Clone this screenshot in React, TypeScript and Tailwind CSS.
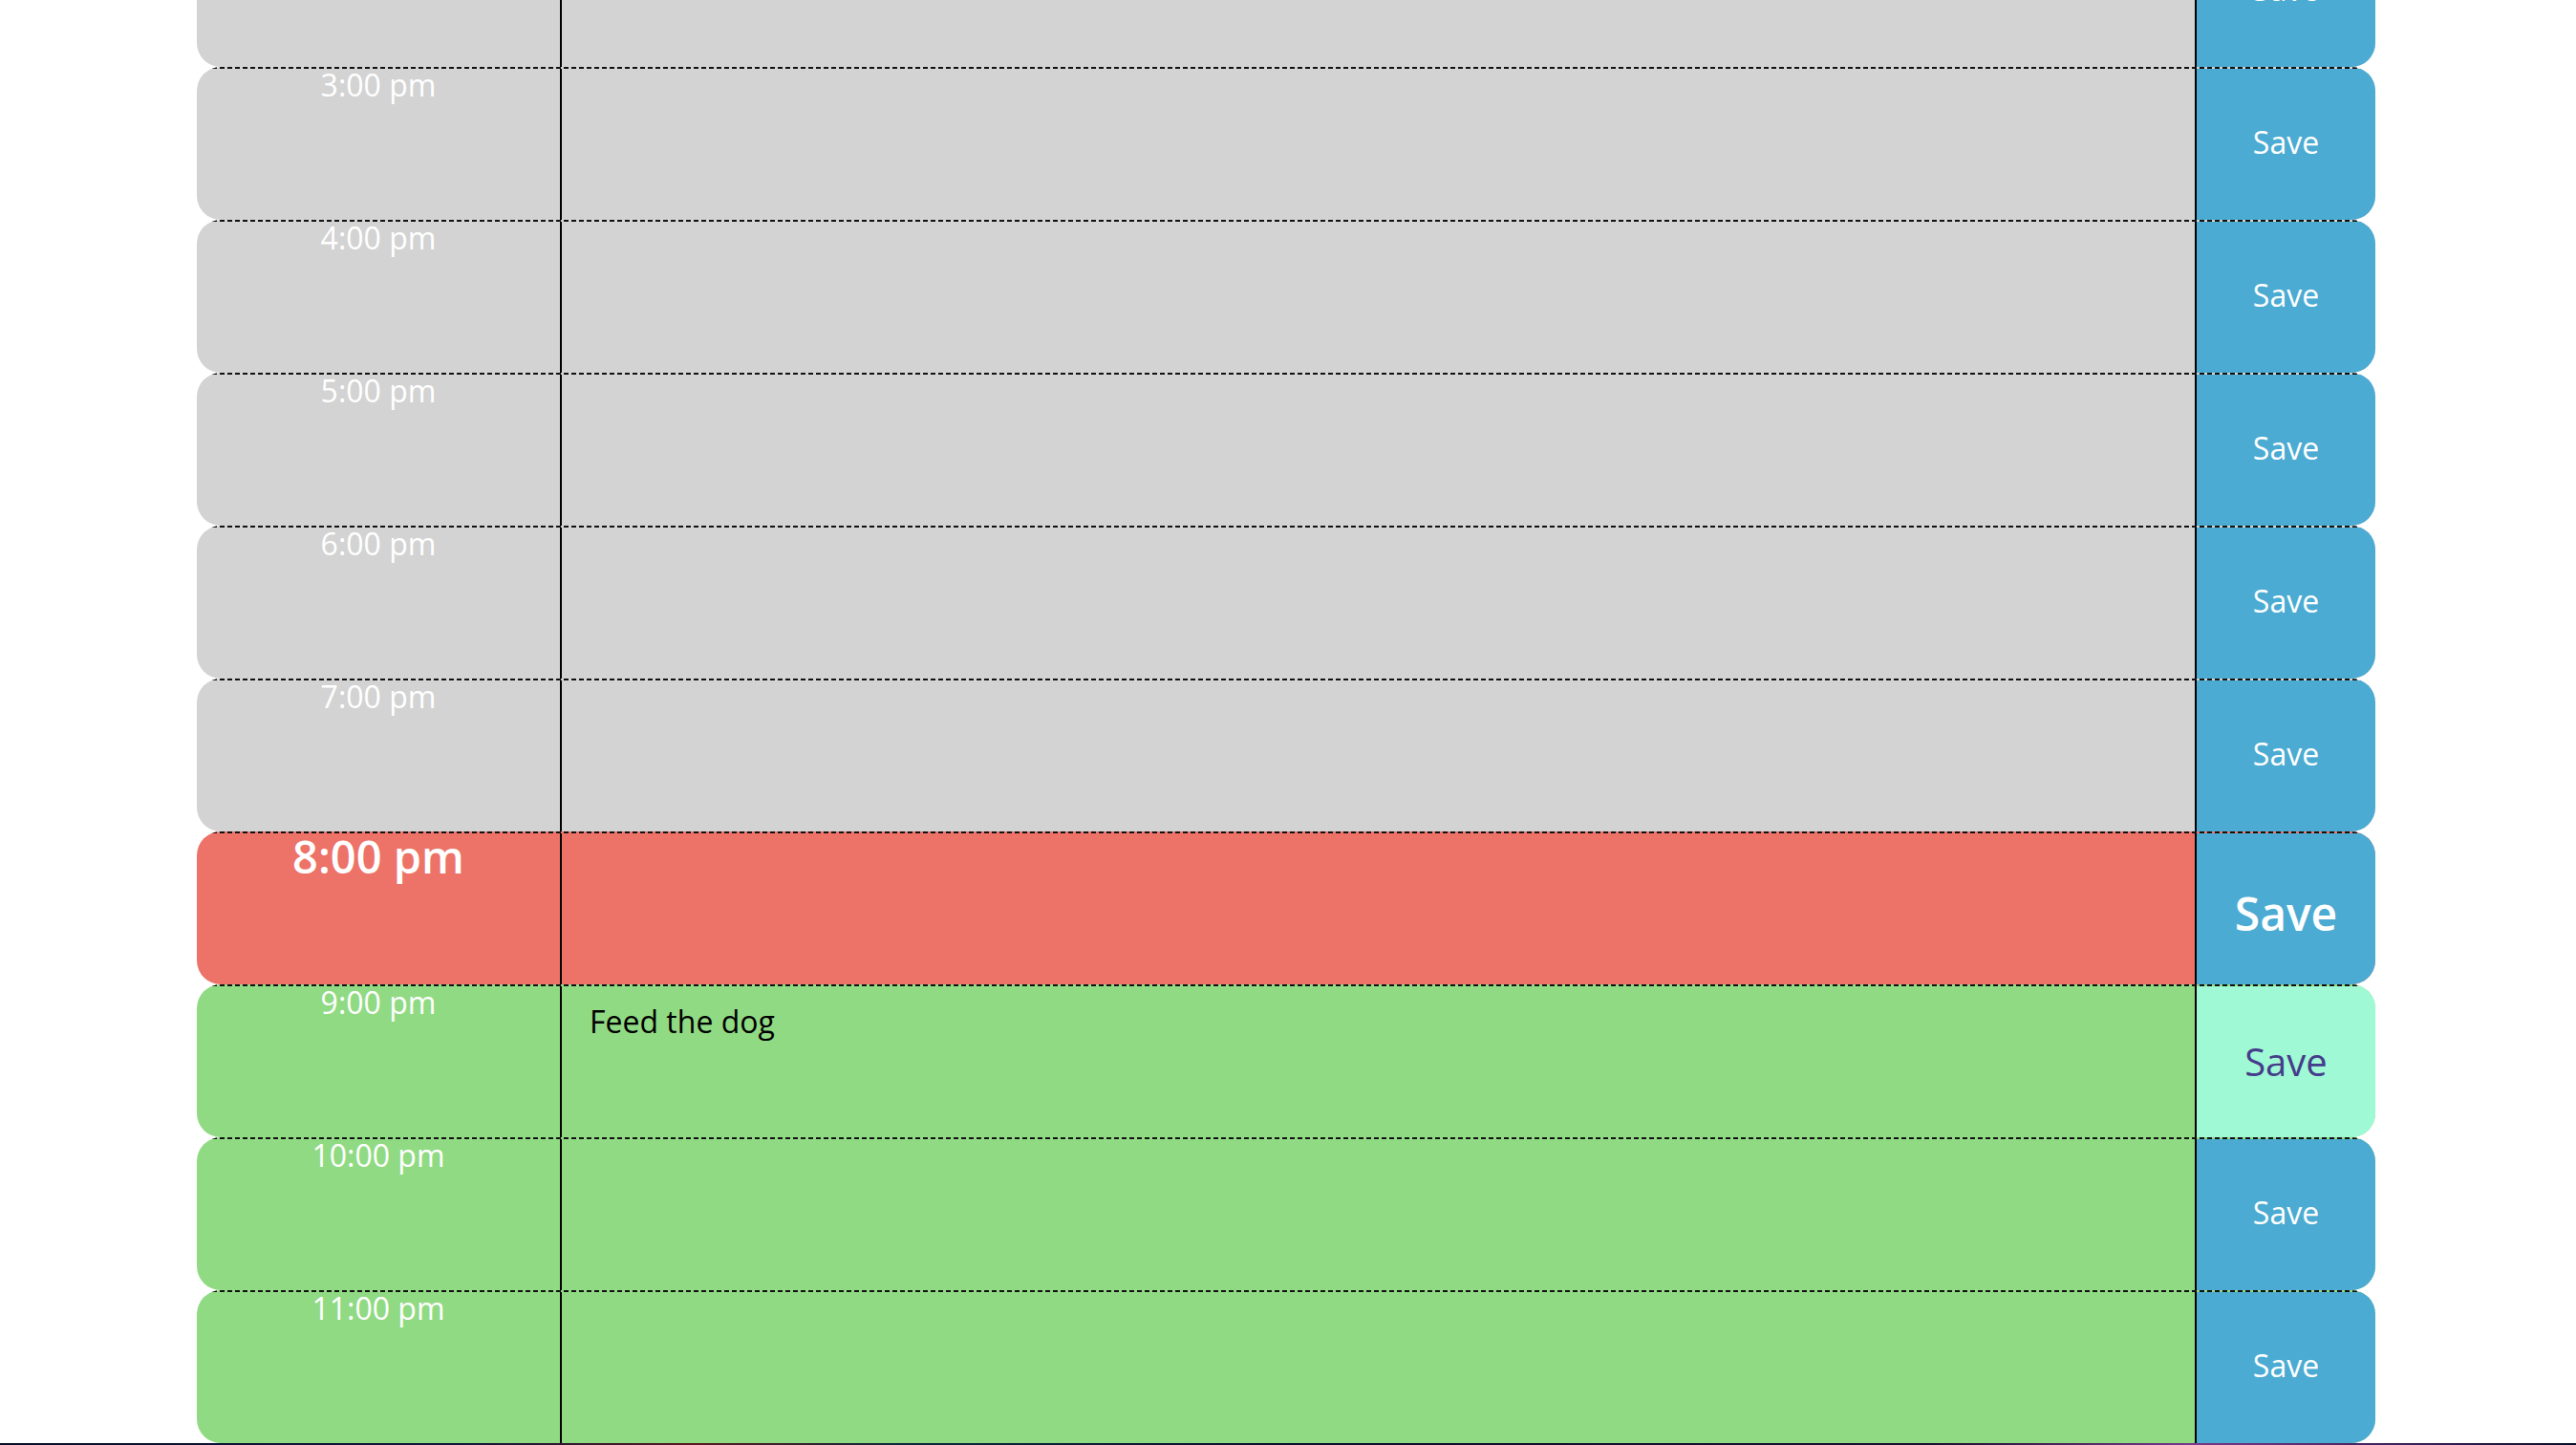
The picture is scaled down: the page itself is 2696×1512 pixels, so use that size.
type Slot = 'past' | 'present' | 'future';

// the page is scrolled: only the afternoon/evening blocks are in view
const HOURS = [14, 15, 16, 17, 18, 19, 20, 21, 22, 23];
const CURRENT_HOUR = 20;
const HOVERED_HOUR = 21;
const NOTES: Record<number, string> = { 21: 'Feed the dog' };

const rowBg: Record<Slot, string> = {
  past: 'bg-[#d3d3d3]',
  present: 'bg-[#ed7268]',
  future: 'bg-[#91da84]',
};

function formatHour(h: number) {
  const suffix = h >= 12 ? 'pm' : 'am';
  const hr = h % 12 || 12;
  return `${hr}:00 ${suffix}`;
}

function slotFor(h: number): Slot {
  if (h < CURRENT_HOUR) return 'past';
  if (h === CURRENT_HOUR) return 'present';
  return 'future';
}

function TimeBlock({ hour }: { hour: number }) {
  const slot = slotFor(hour);
  const present = slot === 'present';
  const hovered = hour === HOVERED_HOUR;

  return (
    <div className={`flex h-[160px] shrink-0 flex-col overflow-hidden rounded-[25px] ${rowBg[slot]}`}>
      {/* dashed top edge */}
      <div className="h-[2px] shrink-0 bg-[repeating-linear-gradient(90deg,#111_0_5px,transparent_5px_8px)]" />
      <div className="flex min-h-0 flex-1">
        <div
          className={`w-[382px] shrink-0 border-r-2 border-black pt-[1px] text-center leading-none text-white ${
            present ? 'text-[47px] font-semibold' : 'text-[32px]'
          }`}
        >
          {formatHour(hour)}
        </div>
        <textarea
          defaultValue={NOTES[hour] ?? ''}
          className="min-w-0 flex-1 resize-none border-0 bg-transparent pl-[29px] pt-[13px] text-[32px] leading-normal text-black outline-none font-['Open_Sans',sans-serif]"
        />
        <button
          className={`flex w-[189px] shrink-0 items-center justify-center border-l-2 border-black ${
            hovered
              ? 'bg-[#9ff9d5] text-[40px] text-[#463c8b]'
              : present
                ? 'bg-[#4cabd2] pt-[10px] text-[48px] font-semibold text-white'
                : 'bg-[#4cabd2] pb-[4px] text-[32px] text-white'
          }`}
        >
          Save
        </button>
      </div>
    </div>
  );
}

export default function App() {
  return (
    <div className="flex h-[1512px] flex-col justify-end overflow-hidden bg-white font-['Open_Sans',sans-serif]">
      <div className="ml-[206px] flex w-[2280px] shrink-0 flex-col">
        {HOURS.map((h) => (
          <TimeBlock key={h} hour={h} />
        ))}
      </div>
      <div className="h-[2px] w-full shrink-0 bg-[linear-gradient(90deg,#0a0f2e_0%,#10183a_18%,#5a1a20_27%,#0e2a3a_35%,#0a0f2e_50%,#1a1030_75%,#7a3a8a_85%,#0a0f2e_100%)]" />
    </div>
  );
}
